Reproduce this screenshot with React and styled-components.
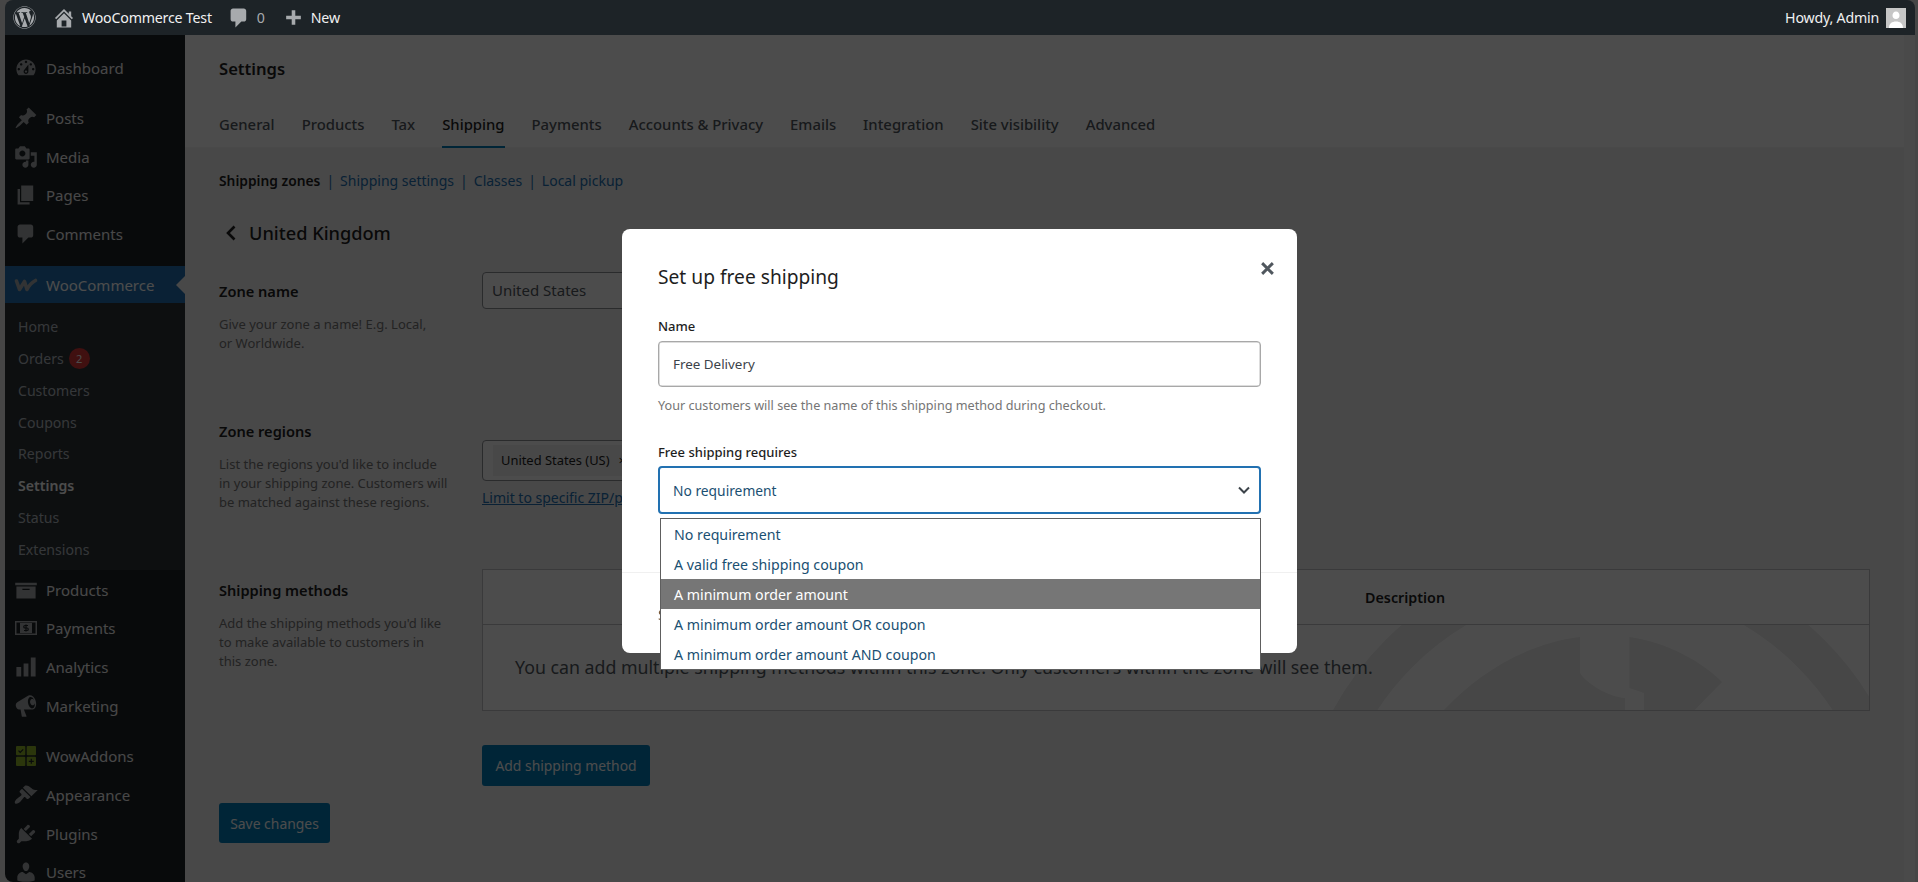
import React from "react";
import styled, { createGlobalStyle } from "styled-components";
import { FaWordpress } from "react-icons/fa";

const Global = createGlobalStyle`
  html, body { margin: 0; height: 100%; overflow: hidden; background: #e9e9ea; }
  * { box-sizing: border-box; }
  body { font-family: "Noto Sans", "Open Sans", sans-serif; color: #1e1e1e; }
`;

const Frame = styled.div`
  display: flex; flex-direction: column; height: 882px; padding: 0 3px 0 5px; overflow: hidden;
`;
const TopBar = styled.header`
  position: relative; z-index: 3; flex: none; height: 35px; display: flex; align-items: center;
  background: #1d2327; border-radius: 8px 8px 0 0; color: #f0f0f1; font-size: 14.2px; letter-spacing: -.2px; padding: 0 9px 0 8px;
`;
const BarItem = styled.div`
  display: flex; align-items: center; gap: ${p => p.$gap ?? 8}px; margin-left: ${p => p.$ml ?? 0}px;
  color: ${p => p.$muted ? "#a7aaad" : "#f0f0f1"};
`;
const BarIcon = styled.svg`
  width: ${p => p.$s ?? 24}px; height: ${p => p.$s ?? 24}px; fill: #a7aaad; flex: none;
`;
const Logo = styled(FaWordpress)`
  width: 23px; height: 23px; color: #a7aaad; flex: none;
`;
const Spacer = styled.div`flex: 1;`;
const Avatar = styled.svg`
  width: 20px; height: 20px; flex: none; margin-left: 7px;
`;
const Body = styled.div`
  flex: 1; min-height: 0; display: flex;
`;
const Sidebar = styled.nav`
  flex: none; width: 180px; background: #1d2327; padding-top: 14px; border-radius: 0 0 0 8px; overflow: hidden;
`;
const MenuItem = styled.div`
  position: relative; display: flex; align-items: center; height: ${p => p.$h ?? 38.7}px; padding-left: 9px;
  margin-top: ${p => p.$mt ?? 0}px; color: #f0f0f1; font-size: 15px; gap: 8px;
  background: ${p => p.$active ? "#2271b1" : "transparent"};
  ${p => p.$active && `color: #fff; padding-top: 1px; &::after {
    content: ""; position: absolute; right: 0; top: 10px; border: 9px solid transparent; border-right-color: #f0f0f1; border-left-width: 0;
  }`}
`;
const MenuIcon = styled.svg`
  width: 24px; height: 24px; fill: #a7aaad; flex: none;
`;
const WooIcon = styled.svg`
  width: 24px; height: 24px; fill: none; stroke: #a7aaad; stroke-width: 3.6; stroke-linecap: round; stroke-linejoin: round; flex: none;
`;
const SubMenu = styled.div`
  background: #2c3338; padding: 8px 0 6px 13px; height: 267.5px;
`;
const SubItem = styled.div`
  display: flex; align-items: center; gap: 5px; height: 31.8px; font-size: 14.1px;
  color: ${p => p.$on ? "#fff" : "rgba(240,246,252,.7)"}; font-weight: ${p => p.$on ? 600 : 400};
`;
const Badge = styled.span`
  width: 21px; height: 21px; border-radius: 50%; background: #d63638; color: #fff; font-size: 11px;
  display: flex; align-items: center; justify-content: center;
`;
const Main = styled.main`
  flex: 1; min-width: 0; display: flex; flex-direction: column; background: #f0f0f1;
`;
const ScrollTrack = styled.div`
  flex: none; width: 11px; background: #f7f7f7;
`;
const PageHead = styled.div`
  flex: none; height: 113px; background: #fff; padding: 20px 0 0 34px; border-bottom: 1px solid #f3f3f3;
`;
const PageTitle = styled.h1`
  margin: 0; font-size: 16.6px; line-height: 28px; font-weight: 600; color: #1e1e1e;
`;
const Tabs = styled.div`
  display: flex; gap: 27px; margin-top: 18px;
`;
const Tab = styled.div`
  font-size: 14.85px; line-height: 22px; font-weight: 500; padding: 12px 0 11px;
  color: ${p => p.$on ? "#1e1e1e" : "#50575e"};
  border-bottom: 2px solid ${p => p.$on ? "#007cba" : "transparent"};
`;
const Content = styled.div`
  flex: 1; padding: 23px 35px 0 34px;
`;
const SubNav = styled.div`
  display: flex; gap: 6px; font-size: 14px; line-height: 20px; color: #2271b1;
`;
const SubNavCurrent = styled.span`
  font-weight: 600; font-size: 13.8px; color: #1e1e1e;
`;
const BackRow = styled.div`
  display: flex; align-items: center; gap: 11px; margin-top: 28px; height: 28px; padding-left: 5px;
  font-size: 18.2px; font-weight: 500; color: #1e1e1e;
`;
const Chevron = styled.svg`
  width: 14px; height: 18px; fill: none; stroke: currentColor; stroke-width: 2.6;
`;
const Section = styled.section`
  display: grid; grid-template-columns: 263px 1fr; height: ${p => p.$h}px; margin-top: ${p => p.$mt ?? 0}px;
`;
const LabelCol = styled.div`
  padding-top: ${p => p.$pt ?? 0}px;
`;
const ControlCol = styled.div`
  padding-top: ${p => p.$pt ?? 0}px;
`;
const SectionTitle = styled.h2`
  margin: 0 0 14px; font-size: 14.6px; line-height: 20px; font-weight: 600; color: #1e1e1e;
`;
const SectionDesc = styled.p`
  margin: 0; font-size: 13px; line-height: 19px; color: #757575; width: 229px;
`;
const TextBox = styled.div`
  width: 420px; height: ${p => p.$h}px; border: 1px solid #8c8f94; border-radius: 4px; background: #fff;
  display: flex; align-items: center; padding-left: ${p => p.$pl}px; padding-bottom: 1px; font-size: 15px; color: #50575e;
`;
const Chip = styled.span`
  display: flex; gap: 9px; align-items: center; height: 31px; padding: 0 8px; background: #f0f0f0; font-size: 12.9px; color: #1e1e1e;
`;
const LimitLink = styled.a`
  display: block; margin-top: 7px; font-size: 14px; line-height: 20px; color: #2271b1; text-decoration: underline;
`;
const MethodTable = styled.div`
  width: 1388px; height: 142px; border: 1px solid #c3c4c7; background: #fff; display: flex; flex-direction: column;
`;
const MethodHead = styled.div`
  flex: none; height: 55px; border-bottom: 1px solid #c3c4c7; display: flex; align-items: center; padding-left: 882px;
  font-size: 14.3px; font-weight: 600; color: #1e1e1e;
`;
const MethodBody = styled.div`
  position: relative; flex: 1; overflow: hidden; display: flex; align-items: center; padding: 0 0 2px 32px;
  font-size: 17.75px; color: #50575e;
`;
const Watermark = styled.svg`
  position: absolute; left: 0; top: 0; width: 1386px; height: 86px; fill: #ededed;
`;
const EmptyText = styled.span`
  position: relative;
`;
const Primary = styled.button`
  display: block; height: ${p => p.$h}px; width: ${p => p.$w}px; margin-top: ${p => p.$mt}px; padding: 0;
  border: 0; border-radius: 3px; background: #007cba; color: #fff; font: 400 13.9px "Noto Sans", sans-serif;
`;
const Overlay = styled.div`
  position: fixed; inset: 0; z-index: 2; background: rgba(0,0,0,.7); display: flex; justify-content: center; align-items: flex-start; padding: 229px 0 0 1px;
`;
const Modal = styled.div`
  position: relative; width: 675px; height: 424px; background: #fff; border-radius: 8px; display: flex; flex-direction: column;
`;
const ModalBody = styled.div`
  flex: 1; padding: 32px 36px 0;
`;
const ModalTitle = styled.h2`
  margin: 0; font-size: 19.2px; line-height: 32px; font-weight: 400; color: #1e1e1e;
`;
const Close = styled.svg`
  position: absolute; top: 31.5px; right: 22.5px; width: 15px; height: 15px; stroke: #50575e; stroke-width: 2.7; fill: none;
`;
const FieldLabel = styled.div`
  margin-top: ${p => p.$mt}px; font-size: 13px; line-height: 20px; font-weight: 500; color: #1e1e1e;
`;
const Field = styled.div`
  margin-top: 5px; height: 46px; border: 1px solid #a8a8a8; border-radius: 4px; box-shadow: inset 0 0 0 .5px #bbb; display: flex; align-items: center; padding-left: 14px;
  font-size: 13.4px; color: #3c434a;
`;
const Hint = styled.div`
  margin-top: 8px; font-size: 12.65px; line-height: 20px; color: #757575;
`;
const SelectBox = styled.div`
  margin-top: 4px; height: 48px; border: 2px solid #2271b1; border-radius: 4px; display: flex; align-items: center; justify-content: space-between;
  padding: 0 7px 0 13px; font-size: 13.8px; color: #1a4f72;
`;
const Caret = styled.svg`
  width: 16px; height: 16px; fill: none; stroke: #3c434a; stroke-width: 2;
`;
const ModalFoot = styled.div`
  flex: none; height: 81px; border-top: 1px solid #f0f0f0; padding: 32px 36px 0; font-size: 14px; color: #7a5a3a;
`;
const Dropdown = styled.ul`
  position: absolute; left: 38px; right: 36px; top: 289px; margin: 0; padding: 0; list-style: none; background: #fff; border: 1px solid #5e5e5e;
`;
const Option = styled.li`
  height: 30px; display: flex; align-items: center; padding-left: 13px; font-size: 14.2px;
  background: ${p => p.$on ? "#767676" : "#fff"}; color: ${p => p.$on ? "#fff" : "#1a4f72"};
`;

const P = {
  dash: "M3.76 16h12.48c1.1-1.37 1.76-3.11 1.76-5 0-4.42-3.58-8-8-8s-8 3.58-8 8c0 1.89.66 3.63 1.76 5zM10 4c.55 0 1 .45 1 1s-.45 1-1 1-1-.45-1-1 .45-1 1-1zM6 6c.55 0 1 .45 1 1s-.45 1-1 1-1-.45-1-1 .45-1 1-1zm8 0c.55 0 1 .45 1 1s-.45 1-1 1-1-.45-1-1 .45-1 1-1zm-5.37 5.55L12 7v6c0 1.1-.9 2-2 2s-2-.9-2-2c0-.57.24-1.08.63-1.45zM4 10c.55 0 1 .45 1 1s-.45 1-1 1-1-.45-1-1 .45-1 1-1zm12 0c.55 0 1 .45 1 1s-.45 1-1 1-1-.45-1-1 .45-1 1-1zm-5 3c0-.55-.45-1-1-1s-1 .45-1 1 .45 1 1 1 1-.45 1-1z",
  pin: "M10.44 3.02l1.82-1.82 6.36 6.35-1.83 1.82c-1.05-.68-2.48-.57-3.41.36l-.75.75c-.92.93-1.04 2.35-.35 3.41l-1.83 1.82-2.41-2.41-2.8 2.79c-.42.42-3.38 2.71-3.8 2.29s1.86-3.39 2.28-3.81l2.79-2.79L4.1 9.36l1.83-1.82c1.05.69 2.48.57 3.4-.36l.75-.75c.93-.92 1.05-2.35.36-3.41z",
  media: "M13 11V4c0-.55-.45-1-1-1h-1.67L9 1H5L3.67 3H2c-.55 0-1 .45-1 1v7c0 .55.45 1 1 1h10c.55 0 1-.45 1-1zM7 4.5c1.38 0 2.5 1.12 2.5 2.5S8.38 9.5 7 9.5 4.5 8.38 4.5 7 5.62 4.5 7 4.5zM14 6h5v10.5c0 1.38-1.12 2.5-2.5 2.5S14 17.88 14 16.5s1.12-2.5 2.5-2.5c.17 0 .34.02.5.05V9h-3V6zm-4 8.05V13h2v3.5c0 1.38-1.12 2.5-2.5 2.5S7 17.88 7 16.5 8.12 14 9.5 14c.17 0 .34.02.5.05z",
  page: "M6 15V2h10v13H6zm-1 1h8v2H3V5h2v11z",
  comment: "M5 2h9c1.1 0 2 .9 2 2v7c0 1.1-.9 2-2 2h-2l-5 5v-5H5c-1.1 0-2-.9-2-2V4c0-1.1.9-2 2-2z",
  archive: "M19 4v2H1V4h18zM2 7h16v10H2V7zm11 3V9H7v1h6z",
  chart: "M18 18V2h-4v16h4zm-6 0V7H8v11h4zm-6 0v-8H2v8h4z",
  mega: "M18.15 5.94c.46 1.62.38 3.22-.02 4.48-.42 1.28-1.26 2.18-2.3 2.48-.16.06-.26.06-.4.06-.06.02-.12.02-.18.02-.06.02-.14.02-.22.02h-6.8l2.22 5.5c.02.14-.06.26-.14.34-.08.1-.24.16-.34.16H6.95c-.1 0-.26-.06-.34-.16-.08-.08-.16-.2-.14-.34l-1-5.5H4.25l-.02-.02c-.5.06-1.08-.18-1.54-.62s-.88-1.08-1.06-1.88c-.24-.8-.2-1.56-.02-2.2.18-.62.58-1.08 1.06-1.3l.02-.02 9-5.4c.1-.06.18-.1.24-.16.06-.04.14-.08.24-.12.16-.08.28-.12.5-.18 1.04-.3 2.24.1 3.22 1 .98.88 1.8 2.24 2.26 3.86zm-2.58 5.98h-.02c.4-.1.74-.34 1.04-.7.58-.7.86-1.76.86-3.04-.02-.64-.12-1.3-.3-1.98-.2-.68-.46-1.32-.78-1.88-.32-.54-.72-1-1.14-1.34-.42-.32-.84-.5-1.26-.5-.16 0-.32.02-.48.06-.42.12-.76.36-1.04.7-.6.7-.86 1.76-.86 3.04 0 .64.1 1.3.3 1.98.18.68.46 1.32.78 1.88.32.54.72 1 1.14 1.34.42.32.86.5 1.26.5.18 0 .34-.02.5-.06zm-2.1-4.54c-.22-.78-.16-1.5.12-2.06.26-.56.66-.96 1.14-1.08.5-.14 1.02-.02 1.52.34.5.36.9.92 1.12 1.7.22.78.16 1.5-.12 2.06-.28.56-.66.96-1.16 1.08-.48.14-1 .02-1.5-.34-.5-.36-.9-.92-1.12-1.7z",
  brush: "M14.48 11.06L7.41 3.99l1.5-1.5c.5-.56 2.3-.47 3.51.32 1.21.8 1.43 1.28 2.91 2.1 1.18.64 2.45 1.26 4.45.85zm-.71.71L6.7 4.7 4.93 6.47c-.39.39-.39 1.02 0 1.41l1.06 1.06c.39.39.39 1.03 0 1.42-.6.6-1.43 1.11-2.21 1.69-.35.26-.7.53-1.01.84C1.43 13.71 0 16.01 1 17s3.27-.43 4.61-1.77c.31-.31.58-.66.84-1.01.58-.78 1.09-1.61 1.69-2.21.39-.39 1.03-.39 1.42 0l1.06 1.06c.39.39 1.02.39 1.41 0z",
  plug: "M13.11 4.36L9.87 7.6 8 5.73l3.24-3.24c.35-.34 1.05-.2 1.56.32.52.51.66 1.21.31 1.55zm-8 1.77l.91-1.12 9.01 9.01-1.19.84c-.71.71-2.63 1.16-3.82 1.16H6.14L4.9 17.26c-.59.59-1.54.59-2.12 0-.59-.58-.59-1.53 0-2.12l1.24-1.24v-3.88c0-1.13.4-3.19 1.09-3.89zm7.26 3.97l3.24-3.24c.34-.35 1.04-.21 1.55.31.52.51.66 1.21.31 1.55l-3.24 3.25z",
  users: "M10 9.25c-2.27 0-2.73-3.44-2.73-3.44C7 4.02 7.82 2 9.97 2c2.16 0 2.98 2.02 2.71 3.81 0 0-.41 3.44-2.68 3.44zm0 2.57L12.72 10c2.39 0 4.52 2.33 4.52 4.53v2.49s-3.65 1.13-7.24 1.13c-3.65 0-7.24-1.13-7.24-1.13v-2.49c0-2.25 1.94-4.48 4.47-4.48z",
  home: "M16 8.5l1.53 1.53-1.06 1.06L10 4.62l-6.47 6.47-1.06-1.06L10 2.5l4 4v-2h2v4zm-6-2.46l6 5.99V18H4v-5.97zM12 17v-5H8v5h4z",
  plus: "M17 8.3v3.4h-5.3V17H8.3v-5.3H3V8.3h5.3V3h3.4v5.3z",
};
const Ic = ({ d }) => <MenuIcon viewBox="0 0 20 20"><path d={d} /></MenuIcon>;
const PayIcon = () => (
  <MenuIcon viewBox="0 0 24 24">
    <path fillRule="evenodd" d="M1 5h22v14H1zM2.500 6.500v11h19v-11zM6 7h12v10H6z" />
    <path d="M14 9.500h-3a1 1 0 0 0 0 2.500h2a1 1 0 0 1 0 2.500h-3M12 8.500v7" fill="none" stroke="#1d2327" strokeWidth="1.200" />
  </MenuIcon>
);
const WowIcon = () => (
  <MenuIcon viewBox="-2 -2 24 24">
    <g fill="#8fb52a">
      <rect x="0" y="0" width="9.300" height="9.300" rx="1" /><rect x="10.700" y="0" width="9.300" height="9.300" rx="1" />
      <rect x="0" y="10.700" width="9.300" height="9.300" rx="1" /><rect x="10.700" y="10.700" width="9.300" height="9.300" rx="1" />
    </g>
    <path d="M2.500 4.700l1.700 1.700 3-3M15.300 12.800v5M12.800 15.300h5" fill="none" stroke="#1d2327" strokeWidth="1.200" />
  </MenuIcon>
);

const tabs = ["General", "Products", "Tax", "Shipping", "Payments", "Accounts & Privacy", "Emails", "Integration", "Site visibility", "Advanced"];
const subs = ["Home", "Orders", "Customers", "Coupons", "Reports", "Settings", "Status", "Extensions"];
const options = ["No requirement", "A valid free shipping coupon", "A minimum order amount", "A minimum order amount OR coupon", "A minimum order amount AND coupon"];

export default function App() {
  return (
    <>
      <Global />
      <Frame>
        <TopBar>
          <Logo />
          <BarItem $ml={16} $gap={6}>
            <BarIcon viewBox="0 0 20 20"><path d={P.home} /></BarIcon>WooCommerce Test
          </BarItem>
          <BarItem $ml={15} $gap={6} $muted>
            <BarIcon viewBox="0 0 20 20"><path d={P.comment} /></BarIcon>0
          </BarItem>
          <BarItem $ml={18} $gap={7}>
            <BarIcon $s={21} viewBox="0 0 20 20"><path d={P.plus} /></BarIcon>New
          </BarItem>
          <Spacer />
          <BarItem>Howdy, Admin</BarItem>
          <Avatar viewBox="0 0 20 20">
            <rect width="20" height="20" fill="#c6c6c6" />
            <path d="M10 3.500c2.200 0 3.500 1.800 3.500 3.900S12.200 11 10 11 6.500 9.500 6.500 7.400 7.800 3.500 10 3.500zM3 20c0-4.500 3-6.500 7-6.500s7 2 7 6.500z" fill="#fff" />
          </Avatar>
        </TopBar>
        <Body>
          <Sidebar>
            <MenuItem><Ic d={P.dash} />Dashboard</MenuItem>
            <MenuItem $mt={11}><Ic d={P.pin} />Posts</MenuItem>
            <MenuItem><Ic d={P.media} />Media</MenuItem>
            <MenuItem><Ic d={P.page} />Pages</MenuItem>
            <MenuItem><Ic d={P.comment} />Comments</MenuItem>
            <MenuItem $active $h={37} $mt={12.300}>
              <WooIcon viewBox="0 0 24 24"><path d="M2.500 8L5.500 16.500L10.500 8.500L13 16.500C15 12.500 17.500 9.500 21.500 7.500" /></WooIcon>
              WooCommerce
            </MenuItem>
            <SubMenu>
              {subs.map(s => (
                <SubItem key={s} $on={s === "Settings"}>{s}{s === "Orders" && <Badge>2</Badge>}</SubItem>
              ))}
            </SubMenu>
            <MenuItem><Ic d={P.archive} />Products</MenuItem>
            <MenuItem><PayIcon />Payments</MenuItem>
            <MenuItem><Ic d={P.chart} />Analytics</MenuItem>
            <MenuItem><Ic d={P.mega} />Marketing</MenuItem>
            <MenuItem $mt={12}><WowIcon />WowAddons</MenuItem>
            <MenuItem><Ic d={P.brush} />Appearance</MenuItem>
            <MenuItem><Ic d={P.plug} />Plugins</MenuItem>
            <MenuItem><Ic d={P.users} />Users</MenuItem>
          </Sidebar>
          <Main>
            <PageHead>
              <PageTitle>Settings</PageTitle>
              <Tabs>{tabs.map(t => <Tab key={t} $on={t === "Shipping"}>{t}</Tab>)}</Tabs>
            </PageHead>
            <Content>
              <SubNav>
                <SubNavCurrent>Shipping zones</SubNavCurrent><span>|</span>
                <span>Shipping settings</span><span>|</span>
                <span>Classes</span><span>|</span>
                <span>Local pickup</span>
              </SubNav>
              <BackRow>
                <Chevron viewBox="0 0 14 18"><path d="M10.500 2.500L4 9l6.500 6.500" /></Chevron>
                United Kingdom
              </BackRow>
              <Section $h={149} $mt={25}>
                <LabelCol $pt={9}>
                  <SectionTitle>Zone name</SectionTitle>
                  <SectionDesc>Give your zone a name! E.g. Local,<br />or Worldwide.</SectionDesc>
                </LabelCol>
                <ControlCol><TextBox $h={37} $pl={9}>United States</TextBox></ControlCol>
              </Section>
              <Section $h={148}>
                <LabelCol>
                  <SectionTitle>Zone regions</SectionTitle>
                  <SectionDesc>List the regions you'd like to include in your shipping zone. Customers will be matched against these regions.</SectionDesc>
                </LabelCol>
                <ControlCol $pt={19}>
                  <TextBox $h={41} $pl={10}><Chip>United States (US)<span>×</span></Chip></TextBox>
                  <LimitLink>Limit to specific ZIP/postcodes</LimitLink>
                </ControlCol>
              </Section>
              <Section $h={234}>
                <LabelCol $pt={11}>
                  <SectionTitle>Shipping methods</SectionTitle>
                  <SectionDesc>Add the shipping methods you'd like to make available to customers in this zone.</SectionDesc>
                </LabelCol>
                <ControlCol>
                  <MethodTable>
                    <MethodHead>Description</MethodHead>
                    <MethodBody>
                      <Watermark viewBox="0 0 1386 86">
                        <circle cx="1122" cy="234" r="291" fill="none" stroke="#ededed" strokeWidth="38" />
                        <path d="M960 86C995 48 1045 18 1097 12V48C1103 58 1125 72 1142 73V86Z" />
                        <path d="M1146.500 12C1185 18 1218 36 1239 57L1210.600 86H1161V68L1146.500 63Z" />
                      </Watermark>
                      <EmptyText>You can add multiple shipping methods within this zone. Only customers within the zone will see them.</EmptyText>
                    </MethodBody>
                  </MethodTable>
                  <Primary $h={41} $w={168} $mt={34}>Add shipping method</Primary>
                </ControlCol>
              </Section>
              <Primary $h={40} $w={111} $mt={0}>Save changes</Primary>
            </Content>
          </Main>
          <ScrollTrack />
        </Body>
      </Frame>
      <Overlay>
        <Modal>
          <ModalBody>
            <ModalTitle>Set up free shipping</ModalTitle>
            <FieldLabel $mt={23}>Name</FieldLabel>
            <Field>Free Delivery</Field>
            <Hint>Your customers will see the name of this shipping method during checkout.</Hint>
            <FieldLabel $mt={27}>Free shipping requires</FieldLabel>
            <SelectBox>
              No requirement
              <Caret viewBox="0 0 16 16"><path d="M3 5.500l5 5 5-5" /></Caret>
            </SelectBox>
          </ModalBody>
          <ModalFoot>Save</ModalFoot>
          <Close viewBox="0 0 14 14"><path d="M2 2l10 10M12 2L2 12" /></Close>
          <Dropdown>
            {options.map(o => <Option key={o} $on={o === "A minimum order amount"}>{o}</Option>)}
          </Dropdown>
        </Modal>
      </Overlay>
    </>
  );
}
